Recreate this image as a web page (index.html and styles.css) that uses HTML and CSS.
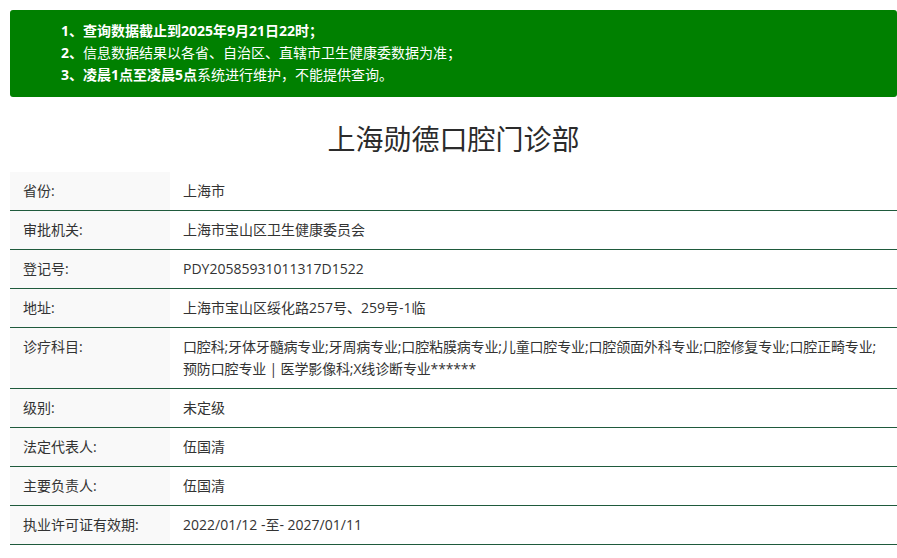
FILE: index.html
```html
<!DOCTYPE html>
<html lang="zh-CN">
<head>
<meta charset="utf-8">
<title>上海勋德口腔门诊部</title>
<link rel="stylesheet" href="styles.css">
</head>
<body>
<div class="page">
  <div class="notice">
    <ol class="notice-list">
      <li><b>1、查询数据截止到2025年9月21日22时；</b></li>
      <li><b>2、</b>信息数据结果以各省、自治区、直辖市卫生健康委数据为准；</li>
      <li><b>3、凌晨1点至凌晨5点</b>系统进行维护，不能提供查询。</li>
    </ol>
  </div>
  <h1 class="title">上海勋德口腔门诊部</h1>
  <div class="info">
    <div class="row"><div class="label">省份:</div><div class="value">上海市</div></div>
    <div class="row"><div class="label">审批机关:</div><div class="value">上海市宝山区卫生健康委员会</div></div>
    <div class="row"><div class="label">登记号:</div><div class="value">PDY20585931011317D1522</div></div>
    <div class="row"><div class="label">地址:</div><div class="value">上海市宝山区绥化路257号、259号-1临</div></div>
    <div class="row"><div class="label">诊疗科目:</div><div class="value"><span class="line">口腔科;牙体牙髓病专业;牙周病专业;口腔粘膜病专业;儿童口腔专业;口腔颌面外科专业;口腔修复专业;口腔正畸专业;</span><span class="line">预防口腔专业 | 医学影像科;X线诊断专业******</span></div></div>
    <div class="row"><div class="label">级别:</div><div class="value">未定级</div></div>
    <div class="row"><div class="label">法定代表人:</div><div class="value">伍国清</div></div>
    <div class="row"><div class="label">主要负责人:</div><div class="value">伍国清</div></div>
    <div class="row"><div class="label">执业许可证有效期:</div><div class="value">2022/01/12 -至- 2027/01/11</div></div>
  </div>
</div>
</body>
</html>
```

FILE: styles.css
```css
html, body {
  margin: 0;
  padding: 0;
  background: #fff;
}
body {
  font-family: "Open Sans", "Noto Sans CJK SC", sans-serif;
  color: #333;
  font-size: 14px;
}
.page {
  margin: 10px 0 0 10px;
}
.notice {
  background: #008000;
  border-radius: 3px;
  height: 87px;
  box-sizing: border-box;
  padding: 10px 0 0 51px;
  color: #fff;
}
.notice-list {
  list-style: none;
  margin: 0;
  padding: 0;
  line-height: 22px;
  font-size: 14px;
}
.notice-list b {
  font-weight: 700;
}
.title {
  margin: 0;
  height: 75px;
  display: flex;
  align-items: center;
  justify-content: center;
  font-size: 28px;
  font-weight: 400;
  color: #2b2b2b;
  padding-top: 6px;
  box-sizing: border-box;
}
.info {
  display: flex;
  flex-direction: column;
}
.row {
  display: flex;
  border-bottom: 1px solid #1f5a3c;
}
.label {
  width: 160px;
  flex: none;
  box-sizing: border-box;
  background: #f9f9f9;
  padding: 8px 13px;
  line-height: 22px;
}
.value {
  flex: 1;
  min-width: 0;
  padding: 8px 13px;
  line-height: 22px;
}
.line {
  display: block;
  white-space: nowrap;
  letter-spacing: -0.15px;
}
```
